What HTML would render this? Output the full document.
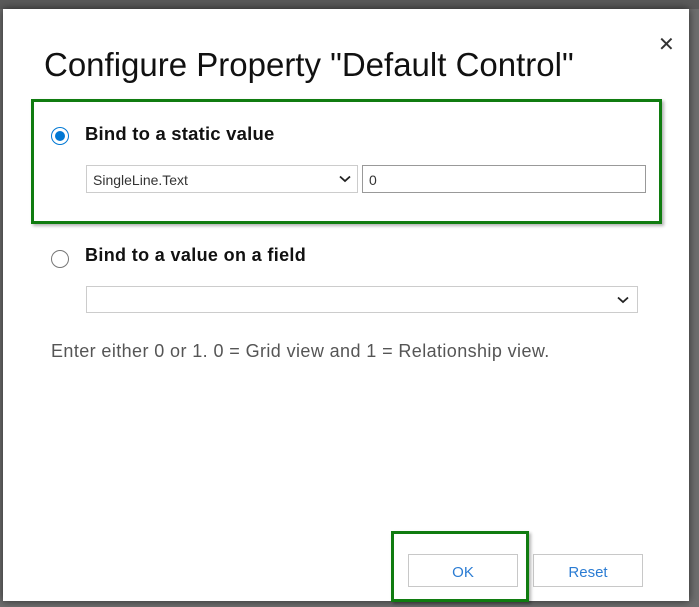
<!DOCTYPE html>
<html><head><style>
*{margin:0;padding:0;box-sizing:border-box}
body{width:699px;height:607px;background:#6e6e6e;position:relative;overflow:hidden;font-family:"Liberation Sans",sans-serif}
.a{position:absolute;white-space:nowrap}
#dlg{position:absolute;left:3px;top:9px;width:686px;height:592px;background:#fff;box-shadow:0 0 8px rgba(0,0,0,.6)}
.sel{position:absolute;border:1px solid #ccc;background:#fff;font-size:14px;color:#333}
.btn{position:absolute;border:1px solid #c8c8c8;color:#2b7cd3;font-size:15px;text-align:center;line-height:36px}
.g{position:absolute;border:3px solid #107c10;box-shadow:2px 2px 3px rgba(0,0,0,.3)}
</style></head><body>
<div class="a" style="left:0;top:0;width:699px;height:9px;background:#5a5a5a"></div>
<div id="dlg"></div>
<div class="a" style="left:658px;top:32px;font-size:20px;color:#333">✕</div>
<div class="a" style="left:44px;top:46px;font-size:33px;color:#111">Configure Property "Default Control"</div>
<div class="g" style="left:31px;top:99px;width:631px;height:125px"></div>
<div class="a" style="left:51px;top:127px;width:18px;height:18px;border:1px solid #0078d4;border-radius:50%"></div>
<div class="a" style="left:55px;top:131px;width:10px;height:10px;background:#0078d4;border-radius:50%"></div>
<div class="a" style="left:85px;top:123px;font-size:18.5px;font-weight:bold;color:#111;letter-spacing:0.2px">Bind to a static value</div>
<div class="sel" style="left:86px;top:165px;width:272px;height:28px;padding:6px 6px;">SingleLine.Text
<svg style="position:absolute;right:6px;top:9px" width="12" height="8"><path d="M1 1.5L6 6L11 1.5" stroke="#222" stroke-width="1.8" fill="none"/></svg></div>
<div class="sel" style="left:362px;top:165px;width:284px;height:28px;border-color:#999;padding:6px 6px">0</div>
<div class="a" style="left:51px;top:250px;width:18px;height:18px;border:1px solid #777;border-radius:50%"></div>
<div class="a" style="left:85px;top:245px;font-size:18px;font-weight:bold;color:#111;letter-spacing:0.35px">Bind to a value on a field</div>
<div class="sel" style="left:86px;top:286px;width:552px;height:27px">
<svg style="position:absolute;right:8px;top:9px" width="12" height="8"><path d="M1 1.5L6 6L11 1.5" stroke="#222" stroke-width="1.8" fill="none"/></svg></div>
<div class="a" style="left:51px;top:341px;font-size:18px;color:#555;letter-spacing:0.4px">Enter either 0 or 1. 0 = Grid view and 1 = Relationship view.</div>
<div class="btn" style="left:408px;top:554px;width:110px;height:33px">OK</div>
<div class="btn" style="left:533px;top:554px;width:110px;height:33px">Reset</div>
<div class="g" style="left:391px;top:531px;width:138px;height:71px"></div>
</body></html>
